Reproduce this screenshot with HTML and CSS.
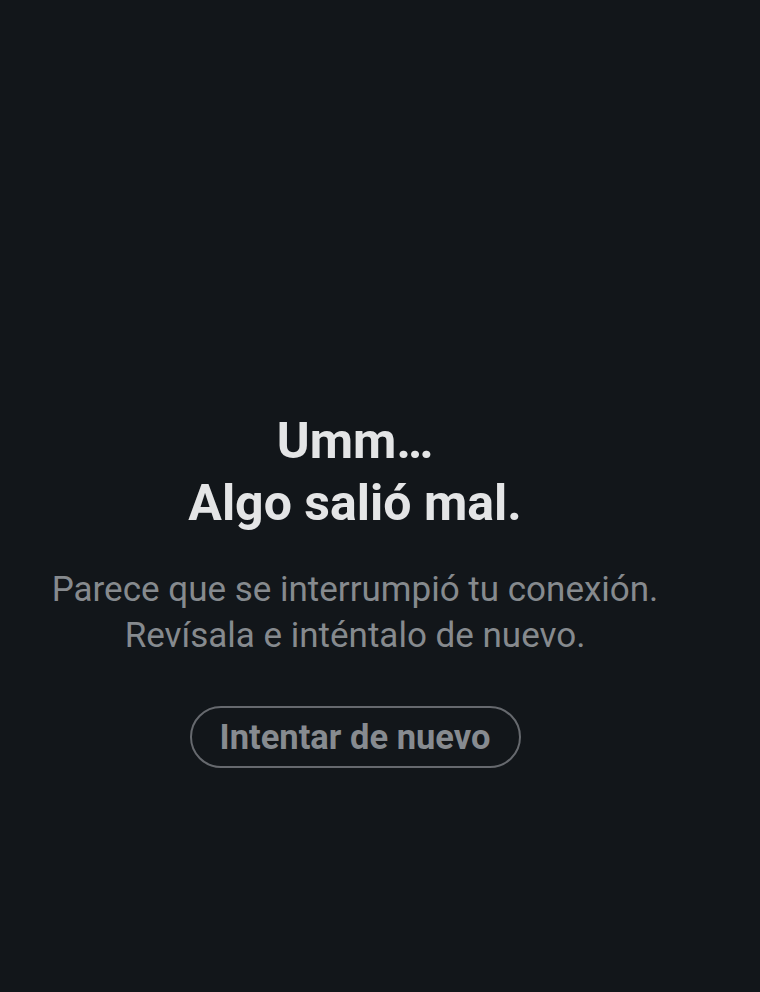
FILE: index.html
```html
<!DOCTYPE html>
<html lang="es">
<head>
<meta charset="utf-8">
<title>Error</title>
<link rel="stylesheet" href="styles.css">
</head>
<body>
<main class="screen">
  <h1 class="title">Umm…<br>Algo salió mal.</h1>
  <p class="message">Parece que se interrumpió tu conexión.<br>Revísala e inténtalo de nuevo.</p>
  <button class="retry" type="button">Intentar de nuevo</button>
</main>
</body>
</html>
```
FILE: styles.css
```css
html, body {
  margin: 0;
  padding: 0;
  background: #12161a;
}
body {
  width: 760px;
  height: 992px;
  overflow: hidden;
  font-family: Roboto, "Liberation Sans", sans-serif;
}
.screen {
  display: flex;
  flex-direction: column;
  align-items: center;
  padding: 410px 50px 0 0;
  text-align: center;
}
.title {
  margin: 0;
  font-size: 50px;
  line-height: 62px;
  font-weight: 700;
  color: #e4e5e6;
  white-space: nowrap;
}
.message {
  margin: 33px 0 0;
  font-size: 35px;
  line-height: 46px;
  font-weight: 400;
  color: #868a8e;
  white-space: nowrap;
}
.retry {
  margin-top: 47px;
  width: 331px;
  height: 62px;
  border: 2px solid #66696e;
  border-radius: 31px;
  background: transparent;
  color: #878b90;
  font-family: inherit;
  font-size: 34.5px;
  font-weight: 700;
  padding: 0;
  white-space: nowrap;
}
```
